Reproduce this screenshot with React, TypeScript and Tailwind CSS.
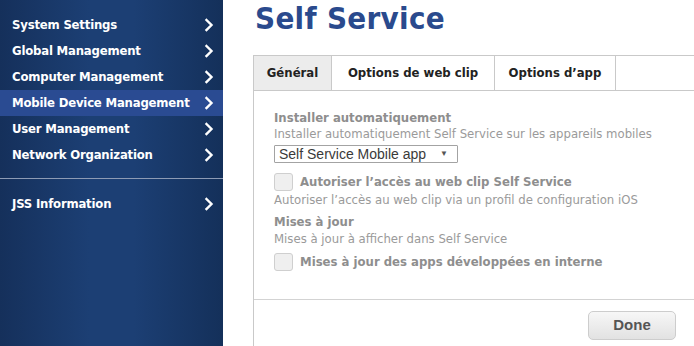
const menu = [
  "System Settings",
  "Global Management",
  "Computer Management",
  "Mobile Device Management",
  "User Management",
  "Network Organization",
]

function Chevron() {
  return (
    <svg className="w-[10px] h-[14px]" viewBox="0 0 10 14" fill="none">
      <path d="M2.5 2l5 5-5 5" stroke="white" strokeWidth={2.4} strokeLinecap="square" strokeLinejoin="miter" />
    </svg>
  )
}

function MenuRow({ label, active }: { label: string; active?: boolean }) {
  return (
    <div
      className={`flex items-center justify-between h-[26px] pl-[12px] pr-[9px] ${
        active ? "bg-[#2a4b92]" : ""
      }`}
    >
      <span className="text-white font-bold text-[13px] tracking-[-0.2px]">{label}</span>
      <Chevron />
    </div>
  )
}

function Checkbox() {
  return <span className="inline-block w-[19px] h-[18px] rounded-[3px] border border-[#cfcfcf] bg-[#efefef]" />
}

export default function App() {
  return (
    <div
      className="flex w-[694px] h-[346px] overflow-hidden bg-white"
      style={{ fontFamily: "'DejaVu Sans Condensed', 'DejaVu Sans', sans-serif" }}
    >
      {/* Sidebar */}
      <div className="w-[223px] h-[346px] shrink-0 bg-[#1b3c6f] bg-[linear-gradient(to_right,#15305b,#1c3f74_40%,#1c3f74_60%,#14305a)]">
        <div className="pt-[12px]">
          {menu.map((m) => (
            <MenuRow key={m} label={m} active={m === "Mobile Device Management"} />
          ))}
          <div className="mt-[10px] h-[1px] bg-[#8d9bb4]" />
          <div className="mt-[12px]">
            <MenuRow label="JSS Information" />
          </div>
        </div>
      </div>

      {/* Main */}
      <div className="flex-1 pl-[30px] flex flex-col">
        <div className="h-[55px] pl-[2px]">
          <h1 className="text-[31px] leading-[36px] font-bold text-[#2a4a8d] tracking-[0.3px]">Self Service</h1>
        </div>
        <div className="flex-1 border-l border-t border-[#c9c9c9] flex flex-col">
          {/* Tabs */}
          <div className="flex h-[35px] border-b border-[#c9c9c9] text-[13px] font-bold text-[#222]">
            <div className="w-[78px] bg-[#ececec] border-r border-[#c9c9c9] flex items-center justify-center">Général</div>
            <div className="w-[163px] border-r border-[#c9c9c9] flex items-center justify-center">Options de web clip</div>
            <div className="w-[121px] border-r border-[#c9c9c9] flex items-center justify-center">Options d’app</div>
          </div>

          {/* Content */}
          <div className="h-[209px] border-b border-[#d3d3d3] pl-[20px] pt-[19px] text-[13px] text-[#9a9a9a]">
            <div className="leading-[16px] font-bold text-[#8e8e8e]">Installer automatiquement</div>
            <div className="leading-[16px]">Installer automatiquement Self Service sur les appareils mobiles</div>
            <div
              className="mt-[3px] w-[184px] h-[18px] border border-[#a3a3a3] rounded-[1px] flex items-center justify-between pl-[4px] pr-[9px] text-[#3a3a3a] text-[14px]"
              style={{ fontFamily: "'Liberation Sans', Arial, sans-serif" }}
            >
              <span>Self Service Mobile app</span>
              <span className="text-[8px] text-[#555]">▼</span>
            </div>
            <div className="mt-[10px] flex items-center gap-[7px] h-[18px]">
              <Checkbox />
              <span className="font-bold text-[#8e8e8e]">Autoriser l’accès au web clip Self Service</span>
            </div>
            <div className="leading-[16px] mt-[1px]">Autoriser l’accès au web clip via un profil de configuration iOS</div>
            <div className="leading-[16px] mt-[6px] font-bold text-[#8e8e8e]">Mises à jour</div>
            <div className="leading-[16px] mt-[1px]">Mises à jour à afficher dans Self Service</div>
            <div className="mt-[6px] flex items-center gap-[7px] h-[18px]">
              <Checkbox />
              <span className="font-bold text-[#8e8e8e]">Mises à jour des apps développées en interne</span>
            </div>
          </div>

          {/* Footer */}
          <div className="flex-1 flex justify-end items-start pt-[11px] pr-[18px]">
            <button
              className="w-[88px] h-[29px] rounded-[5px] border border-[#cdcdcd] bg-linear-to-b from-[#f7f7f7] to-[#e2e2e2] text-[15px] font-bold text-[#555]"
              style={{ fontFamily: "'Liberation Sans', Arial, sans-serif" }}
            >
              Done
            </button>
          </div>
        </div>
      </div>
    </div>
  )
}
